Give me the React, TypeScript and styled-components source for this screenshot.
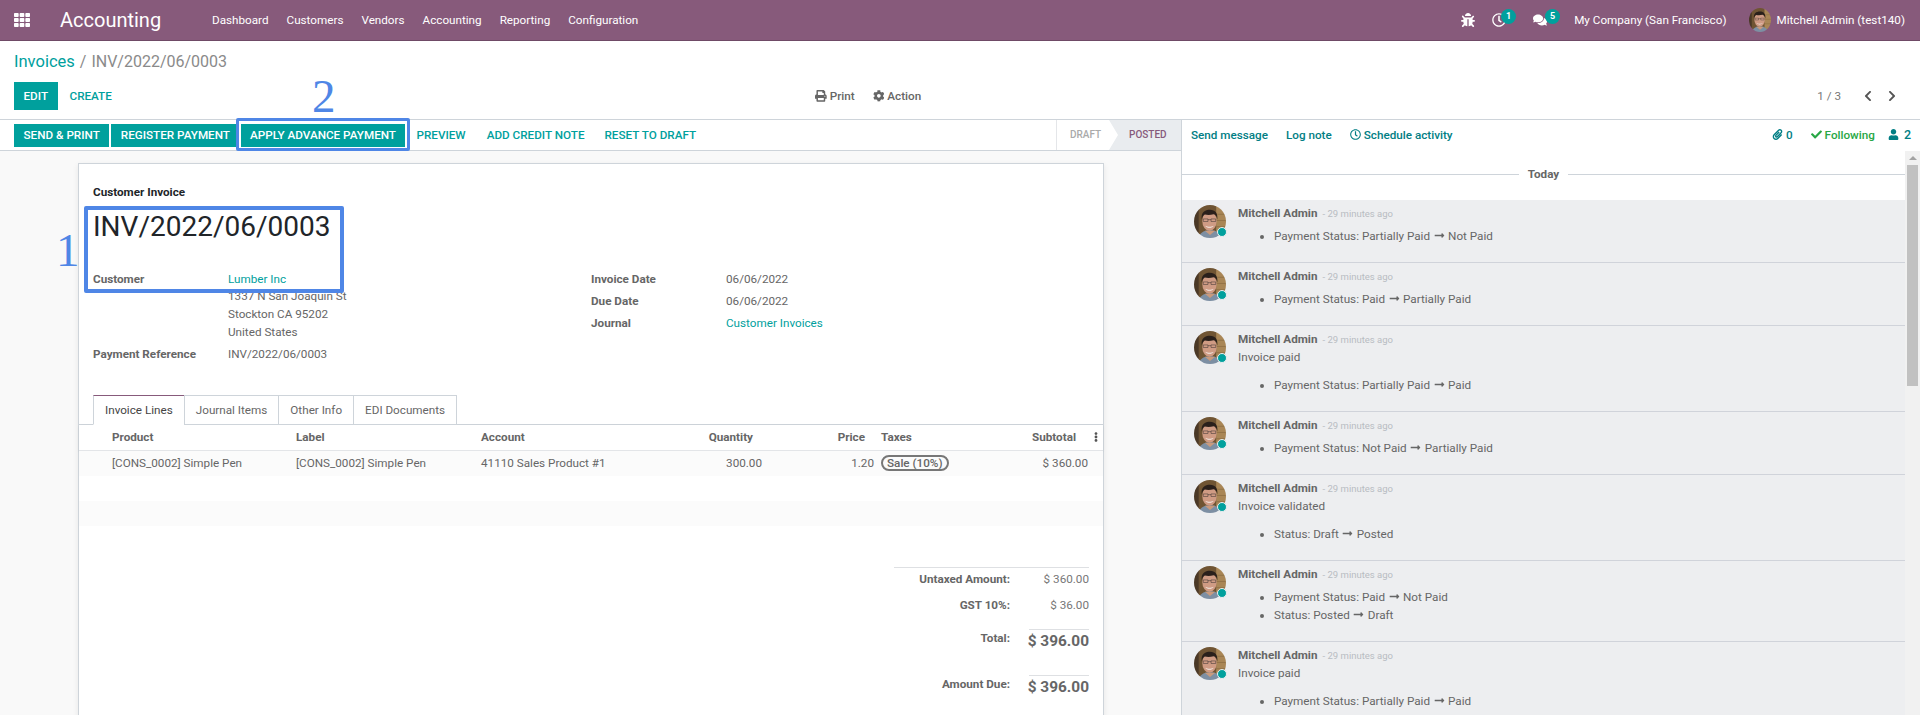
import React from 'react';
import styled, { createGlobalStyle } from 'styled-components';
import {
    FaTh,
    FaBug,
    FaRegClock,
    FaComments,
    FaPrint,
    FaCog,
    FaChevronLeft,
    FaChevronRight,
    FaPaperclip,
    FaCheck,
    FaUser,
    FaLongArrowAltRight,
    FaEllipsisV,
} from 'react-icons/fa';

const GlobalStyle = createGlobalStyle`
    html, body {
        margin: 0;
        height: 715px;
        overflow: hidden;
        background: #fff;
        font-family: Roboto, "Noto Sans", sans-serif;
        font-size: 11.7px;
        line-height: 18px;
        color: #666;
    }
    * {
        box-sizing: border-box;
    }
`;

const TEAL = '#00a09d';
const ANNOTATION = '#4f86e6';

const Page = styled.div`
    display: flex;
    flex-direction: column;
    width: 1920px;
    height: 715px;
    overflow: hidden;
`;

const Navbar = styled.header`
    display: flex;
    align-items: center;
    flex: none;
    height: 41px;
    padding: 0 15px 0 14px;
    background: #875a7b;
    border-bottom: 1px solid #6f4a66;
    color: #fff;
`;

const AppsButton = styled.span`
    display: flex;
    font-size: 16px;
    width: 46px;
`;

const AppName = styled.span`
    font-size: 20px;
    width: 152px;
`;

const NavMenu = styled.nav`
    display: flex;
    gap: 18px;
`;

const NavRight = styled.div`
    display: flex;
    align-items: center;
    margin-left: auto;
`;

const NavIcon = styled.span<{ $width: number }>`
    position: relative;
    display: flex;
    align-items: center;
    width: ${(p) => p.$width}px;
    font-size: 14px;
`;

const NavBadge = styled.span<{ $left: number }>`
    position: absolute;
    left: ${(p) => p.$left}px;
    top: -4px;
    width: 15px;
    height: 15px;
    border-radius: 50%;
    background: ${TEAL};
    font-size: 9px;
    line-height: 15px;
    font-weight: 700;
    text-align: center;
`;

const CompanyName = styled.span`
    margin-right: 23px;
`;

const UserAvatar = styled.span`
    display: flex;
    width: 22px;
    height: 24px;
    margin-right: 5px;
    border-radius: 50%;
    overflow: hidden;
`;

const ControlPanel = styled.div`
    flex: none;
    height: 79px;
    padding: 0 14px;
    background: #fff;
    border-bottom: 1px solid #ced4da;
`;

const Breadcrumb = styled.div`
    height: 41px;
    font-size: 16px;
    line-height: 41px;
    color: #8a8a8a;
    a {
        font-size: 16.5px;
        color: ${TEAL};
    }
`;

const CrumbSeparator = styled.span`
    margin: 0 5px 0 5px;
`;

const ControlRow = styled.div`
    display: grid;
    grid-template-columns: 801px auto 1fr;
    align-items: center;
    height: 28px;
`;

const ButtonGroup = styled.div`
    display: flex;
    align-items: center;
`;

const PrimaryButton = styled.button<{ $tall?: boolean }>`
    height: ${(p) => (p.$tall ? 28 : 23)}px;
    padding: 0 9.5px;
    margin-right: 2px;
    border: 0;
    border-radius: 0;
    background: ${TEAL};
    color: #fff;
    font: 500 11.7px/18px Roboto, sans-serif;
    text-transform: uppercase;
`;

const ApplyButton = styled(PrimaryButton)`
    padding: 0 8.5px;
`;

const LinkButton = styled.a<{ $gap?: number }>`
    margin-left: ${(p) => p.$gap ?? 0}px;
    color: ${TEAL};
    font-weight: 500;
    text-transform: uppercase;
`;

const SideActions = styled.div`
    display: flex;
    gap: 18px;
    font-weight: 500;
    color: #666;
    span {
        display: flex;
        align-items: center;
        gap: 3px;
    }
`;

const Pager = styled.div`
    display: flex;
    justify-content: flex-end;
    align-items: center;
    color: #777;
    padding-right: 8px;
    svg {
        margin-left: 12px;
        font-size: 12px;
        color: #555;
    }
    svg:first-of-type {
        margin-left: 21px;
    }
`;

const Workspace = styled.div`
    display: flex;
    flex: 1;
    min-height: 0;
`;

const FormColumn = styled.main`
    display: flex;
    flex-direction: column;
    width: 1182px;
    flex: none;
    border-right: 1px solid #ced4da;
`;

const StatusBar = styled.div`
    position: relative;
    display: flex;
    flex: none;
    align-items: center;
    justify-content: space-between;
    height: 31px;
    padding-left: 14px;
    background: #fff;
    border-bottom: 1px solid #ced4da;
`;

const StatusSteps = styled.div`
    display: flex;
    align-self: stretch;
    width: 125px;
    border-left: 1px solid #e4e6e9;
    font-size: 10px;
    font-weight: 500;
    text-transform: uppercase;
`;

const DraftStep = styled.span`
    display: flex;
    align-items: center;
    width: 52px;
    padding-left: 13px;
    color: #aaa;
`;

const PostedStep = styled.span`
    display: flex;
    align-items: center;
    flex: 1;
    padding-left: 20px;
    background: #e9ecef;
    clip-path: polygon(0 0, 100% 0, 100% 100%, 0 100%, 9px 50%);
    color: #875a7b;
`;

const FormScroll = styled.div`
    flex: 1;
    min-height: 0;
    overflow: hidden;
    padding: 12px 77px 0 78px;
    background: #f9f9f9;
`;

const Sheet = styled.section`
    position: relative;
    height: 600px;
    padding-top: 19px;
    background: #fff;
    border: 1px solid #ced4da;
    box-shadow: 0 2px 6px rgba(0, 0, 0, 0.08);
`;

const SheetKind = styled.div`
    margin-left: 14px;
    color: #212529;
    font-weight: 700;
`;

const InvoiceTitle = styled.h1`
    margin: 6px 0 0 14px;
    height: 63px;
    font-size: 28px;
    line-height: 40px;
    font-weight: 400;
    color: #212529;
`;

const FieldColumns = styled.div`
    display: grid;
    grid-template-columns: 498px 1fr;
    margin: 0 0 0 14px;
    align-items: start;
`;

const FieldGroup = styled.div`
    display: grid;
    grid-template-columns: 135px 1fr;
    row-gap: 4px;
`;

const FieldLabel = styled.div`
    font-weight: 700;
`;

const FieldValue = styled.div``;

const FieldLink = styled.a`
    color: ${TEAL};
`;

const Address = styled.div`
    margin-top: -1px;
`;

const Tabs = styled.div`
    display: flex;
    height: 30px;
    margin-top: 32px;
    padding-left: 14px;
    border-bottom: 1px solid #ced4da;
`;

const Tab = styled.span<{ $active?: boolean }>`
    display: flex;
    align-items: center;
    height: 30px;
    padding: 0 11px 1px;
    margin-left: -1px;
    white-space: nowrap;
    border: 1px solid #ced4da;
    border-top-color: ${(p) => (p.$active ? '#875a7b' : '#ced4da')};
    border-bottom-color: ${(p) => (p.$active ? '#fff' : '#ced4da')};
    background: #fff;
    color: ${(p) => (p.$active ? '#444' : '#666')};
    &:first-child {
        margin-left: 0;
    }
`;

const COLUMNS = '29px 184px 185px 177px 112px 111px 99px 115px 12px';

const TableHead = styled.div`
    display: grid;
    grid-template-columns: ${COLUMNS};
    align-items: center;
    height: 26px;
    padding-bottom: 2px;
    border-bottom: 1px solid #e3e5e8;
    box-shadow: 0 1px 3px rgba(0, 0, 0, 0.05);
    font-weight: 700;
`;

const TableRow = styled.div<{ $odd?: boolean }>`
    display: grid;
    grid-template-columns: ${COLUMNS};
    align-items: center;
    height: 25px;
    padding-bottom: 1px;
    background: ${(p) => (p.$odd ? '#fbfbfb' : '#fff')};
`;

const Cell = styled.div<{ $right?: boolean; $pad?: number }>`
    padding-left: 4px;
    padding-right: ${(p) => p.$pad ?? 0}px;
    text-align: ${(p) => (p.$right ? 'right' : 'left')};
`;

const KebabCell = styled.div`
    display: flex;
    font-size: 10px;
    color: #555;
`;

const TaxPill = styled.span`
    display: inline-block;
    height: 16px;
    padding: 0 4px;
    border: 2px solid #777;
    border-radius: 8px;
    line-height: 12px;
    font-weight: 500;
`;

const Totals = styled.div`
    display: grid;
    grid-template-columns: 117px 78px;
    width: 195px;
    margin: 41px 14px 0 auto;
    border-top: 1px solid #dee0e3;
`;

const TotalLabel = styled.div<{ $height: number }>`
    height: ${(p) => p.$height}px;
    padding: 2px 1px 0 0;
    text-align: right;
    font-weight: 700;
`;

const TotalValue = styled.div`
    padding-top: 2px;
    text-align: right;
    color: #777;
`;

const GrandLabel = styled(TotalLabel)`
    padding-top: 0;
`;

const GrandValue = styled.div`
    display: flex;
    justify-content: flex-end;
    height: 46px;
    margin-left: 18px;
    border-top: 1px solid #dee0e3;
    font-size: 15.4px;
    line-height: 22px;
    font-weight: 700;
    white-space: nowrap;
`;

const TitleHighlight = styled.div`
    position: absolute;
    left: 5px;
    top: 42px;
    width: 260px;
    height: 87px;
    border: 4px solid ${ANNOTATION};
    border-radius: 2px;
    pointer-events: none;
`;

const ButtonHighlight = styled.div`
    position: absolute;
    left: 236px;
    top: -2px;
    width: 174px;
    height: 33px;
    border: 3px solid ${ANNOTATION};
    border-radius: 2px;
    pointer-events: none;
`;

const AnnotationDigit = styled.span<{ $left: number; $top: number }>`
    position: absolute;
    left: ${(p) => p.$left}px;
    top: ${(p) => p.$top}px;
    font-family: "Liberation Serif", serif;
    font-size: 47px;
    line-height: 47px;
    color: ${ANNOTATION};
`;

const Chatter = styled.aside`
    display: flex;
    flex-direction: column;
    flex: 1;
    min-width: 0;
`;

const ChatterBar = styled.div`
    display: flex;
    flex: none;
    align-items: center;
    height: 31px;
    padding: 0 9px 2px 9px;
    background: #fff;
    font-weight: 500;
    color: #017e84;
`;

const ChatterAction = styled.span<{ $gap?: number }>`
    display: flex;
    align-items: center;
    gap: 3px;
    margin-left: ${(p) => p.$gap ?? 0}px;
    svg {
        font-size: 11px;
    }
`;

const FollowAction = styled(ChatterAction)`
    color: #28a745;
`;

const FollowersAction = styled(ChatterAction)`
    gap: 5px;
    font-size: 12.5px;
`;

const ChatterRight = styled.div`
    display: flex;
    margin-left: auto;
`;

const ChatterBody = styled.div`
    display: flex;
    flex: 1;
    min-height: 0;
`;

const Thread = styled.div`
    flex: 1;
    min-width: 0;
    overflow: hidden;
`;

const DayDivider = styled.div`
    display: flex;
    align-items: center;
    gap: 9px;
    height: 49px;
    padding: 0 0 3px 0;
    font-weight: 700;
    &::before,
    &::after {
        content: '';
        flex: 1;
        height: 1px;
        background: #ced4da;
    }
`;

const Message = styled.article`
    display: flex;
    padding: 4px 0 17px 12px;
    background: #edeef0;
    & + & {
        border-top: 1px solid #d0d3da;
    }
`;

const AvatarWrap = styled.div`
    position: relative;
    flex: none;
    width: 32px;
    height: 33px;
    margin: 1px 12px 0 0;
`;

const AvatarClip = styled.div`
    display: flex;
    width: 100%;
    height: 100%;
    border-radius: 50%;
    overflow: hidden;
`;

const PresenceDot = styled.span`
    position: absolute;
    right: -1px;
    bottom: 1px;
    width: 10px;
    height: 10px;
    border: 1px solid #edeef0;
    border-radius: 50%;
    background: ${TEAL};
`;

const MessageHead = styled.div`
    display: flex;
    align-items: baseline;
    height: 18px;
`;

const Author = styled.span`
    font-weight: 700;
`;

const Stamp = styled.span`
    margin-left: 5px;
    font-size: 9.5px;
    line-height: 12px;
    color: #b8bcc2;
`;

const ChangeList = styled.ul<{ $afterText?: boolean }>`
    margin: ${(p) => (p.$afterText ? 10 : 5)}px 0 0;
    padding: 0 0 0 36px;
    svg {
        margin: 0 3.5px;
        font-size: 11px;
        vertical-align: -1px;
    }
`;

const ScrollTrack = styled.div`
    display: flex;
    flex-direction: column;
    align-items: center;
    flex: none;
    width: 15px;
    background: #f1f1f1;
`;

const ScrollArrow = styled.span`
    width: 0;
    height: 0;
    margin: 5px 0;
    border: 4px solid transparent;
    border-top: 0;
    border-bottom: 4px solid #a3a3a3;
`;

const ScrollThumb = styled.div`
    width: 11px;
    height: 221px;
    background: #c1c1c1;
`;

const FaceSvg = styled.svg`
    filter: blur(0.3px);
`;

const Face: React.FC = () => (
    <FaceSvg viewBox="0 0 32 32" width="100%" height="100%" preserveAspectRatio="xMidYMid slice">
        <rect width="32" height="32" fill="#6f5433" />
        <rect x="22" width="10" height="32" fill="#a98656" />
        <rect width="5" height="32" fill="#4a3826" />
        <path d="M22 9h10M22 15h10M22 21h10" stroke="#8a6b42" strokeWidth="0.7" />
        <path d="M5 32c1-5 5-7.500 11-7.500S26 27 27 32z" fill="#7d8fa3" />
        <path d="M11 25l5 4 5-4z" fill="#c99a7d" />
        <ellipse cx="15.500" cy="15.500" rx="7" ry="9.500" fill="#cf9b84" />
        <path d="M8 14C7 7 11 4.500 16 4.500S24 8 23 14c-.6-3-1.500-4.500-3.500-5-3 .8-6 .8-8.500.3-1.800.9-2.500 2.500-3 4.700z" fill="#2a201b" />
        <path d="M9.500 13.500h4.500v2.500H9.500zM17 13.500h4.500v2.500H17zM14 14.200h3" fill="none" stroke="#3a3230" strokeWidth="0.5" />
        <path d="M11.500 20c2 1.500 6 1.500 8 0-1 2.600-7 2.600-8 0z" fill="#f4ece6" />
    </FaceSvg>
);

type LogEntry = { text?: string; changes: [string, string][] };

const ENTRIES: LogEntry[] = [
    { changes: [['Payment Status: Partially Paid', 'Not Paid']] },
    { changes: [['Payment Status: Paid', 'Partially Paid']] },
    { text: 'Invoice paid', changes: [['Payment Status: Partially Paid', 'Paid']] },
    { changes: [['Payment Status: Not Paid', 'Partially Paid']] },
    { text: 'Invoice validated', changes: [['Status: Draft', 'Posted']] },
    { changes: [['Payment Status: Paid', 'Not Paid'], ['Status: Posted', 'Draft']] },
    { text: 'Invoice paid', changes: [['Payment Status: Partially Paid', 'Paid']] },
];

const App: React.FC = () => {
    return (
        <Page>
            <GlobalStyle />
            <Navbar>
                <AppsButton>
                    <FaTh />
                </AppsButton>
                <AppName>Accounting</AppName>
                <NavMenu>
                    <span>Dashboard</span>
                    <span>Customers</span>
                    <span>Vendors</span>
                    <span>Accounting</span>
                    <span>Reporting</span>
                    <span>Configuration</span>
                </NavMenu>
                <NavRight>
                    <NavIcon $width={31}>
                        <FaBug />
                    </NavIcon>
                    <NavIcon $width={41}>
                        <FaRegClock />
                        <NavBadge $left={9}>1</NavBadge>
                    </NavIcon>
                    <NavIcon $width={41}>
                        <FaComments />
                        <NavBadge $left={12}>5</NavBadge>
                    </NavIcon>
                    <CompanyName>My Company (San Francisco)</CompanyName>
                    <UserAvatar>
                        <Face />
                    </UserAvatar>
                    <span>Mitchell Admin (test140)</span>
                </NavRight>
            </Navbar>

            <ControlPanel>
                <Breadcrumb>
                    <a>Invoices</a>
                    <CrumbSeparator>/</CrumbSeparator>
                    INV/2022/06/0003
                </Breadcrumb>
                <ControlRow>
                    <ButtonGroup>
                        <PrimaryButton $tall>Edit</PrimaryButton>
                        <LinkButton $gap={10}>Create</LinkButton>
                    </ButtonGroup>
                    <SideActions>
                        <span>
                            <FaPrint /> Print
                        </span>
                        <span>
                            <FaCog /> Action
                        </span>
                    </SideActions>
                    <Pager>
                        1 / 3
                        <FaChevronLeft />
                        <FaChevronRight />
                    </Pager>
                </ControlRow>
            </ControlPanel>

            <Workspace>
                <FormColumn>
                    <StatusBar>
                        <ButtonGroup>
                            <PrimaryButton>Send &amp; Print</PrimaryButton>
                            <PrimaryButton>Register Payment</PrimaryButton>
                            <ApplyButton>Apply Advance Payment</ApplyButton>
                            <LinkButton $gap={10}>Preview</LinkButton>
                            <LinkButton $gap={21}>Add Credit Note</LinkButton>
                            <LinkButton $gap={20}>Reset to Draft</LinkButton>
                        </ButtonGroup>
                        <StatusSteps>
                            <DraftStep>Draft</DraftStep>
                            <PostedStep>Posted</PostedStep>
                        </StatusSteps>
                        <ButtonHighlight />
                        <AnnotationDigit $left={312} $top={-47}>2</AnnotationDigit>
                    </StatusBar>
                    <FormScroll>
                        <Sheet>
                            <SheetKind>Customer Invoice</SheetKind>
                            <InvoiceTitle>INV/2022/06/0003</InvoiceTitle>
                            <FieldColumns>
                                <FieldGroup>
                                    <FieldLabel>Customer</FieldLabel>
                                    <FieldValue>
                                        <FieldLink>Lumber Inc</FieldLink>
                                        <Address>
                                            1337 N San Joaquin St
                                            <br />
                                            Stockton CA 95202
                                            <br />
                                            United States
                                        </Address>
                                    </FieldValue>
                                    <FieldLabel>Payment Reference</FieldLabel>
                                    <FieldValue>INV/2022/06/0003</FieldValue>
                                </FieldGroup>
                                <FieldGroup>
                                    <FieldLabel>Invoice Date</FieldLabel>
                                    <FieldValue>06/06/2022</FieldValue>
                                    <FieldLabel>Due Date</FieldLabel>
                                    <FieldValue>06/06/2022</FieldValue>
                                    <FieldLabel>Journal</FieldLabel>
                                    <FieldValue>
                                        <FieldLink>Customer Invoices</FieldLink>
                                    </FieldValue>
                                </FieldGroup>
                            </FieldColumns>
                            <Tabs>
                                <Tab $active>Invoice Lines</Tab>
                                <Tab>Journal Items</Tab>
                                <Tab>Other Info</Tab>
                                <Tab>EDI Documents</Tab>
                            </Tabs>
                            <TableHead>
                                <span />
                                <Cell>Product</Cell>
                                <Cell>Label</Cell>
                                <Cell>Account</Cell>
                                <Cell $right $pad={13}>Quantity</Cell>
                                <Cell $right $pad={12}>Price</Cell>
                                <Cell>Taxes</Cell>
                                <Cell $right $pad={15}>Subtotal</Cell>
                                <KebabCell>
                                    <FaEllipsisV />
                                </KebabCell>
                            </TableHead>
                            <TableRow $odd>
                                <span />
                                <Cell>[CONS_0002] Simple Pen</Cell>
                                <Cell>[CONS_0002] Simple Pen</Cell>
                                <Cell>41110 Sales Product #1</Cell>
                                <Cell $right $pad={4}>300.00</Cell>
                                <Cell $right $pad={3}>1.20</Cell>
                                <Cell>
                                    <TaxPill>Sale (10%)</TaxPill>
                                </Cell>
                                <Cell $right $pad={3}>$ 360.00</Cell>
                            </TableRow>
                            <TableRow />
                            <TableRow $odd />
                            <Totals>
                                <TotalLabel $height={26}>Untaxed Amount:</TotalLabel>
                                <TotalValue>$ 360.00</TotalValue>
                                <TotalLabel $height={35}>GST 10%:</TotalLabel>
                                <TotalValue>$ 36.00</TotalValue>
                                <GrandLabel $height={46}>Total:</GrandLabel>
                                <GrandValue>$ 396.00</GrandValue>
                                <GrandLabel $height={46}>Amount Due:</GrandLabel>
                                <GrandValue>$ 396.00</GrandValue>
                            </Totals>
                            <TitleHighlight />
                            <AnnotationDigit $left={-23} $top={63}>1</AnnotationDigit>
                        </Sheet>
                    </FormScroll>
                </FormColumn>

                <Chatter>
                    <ChatterBar>
                        <ChatterAction>Send message</ChatterAction>
                        <ChatterAction $gap={18}>Log note</ChatterAction>
                        <ChatterAction $gap={18}>
                            <FaRegClock /> Schedule activity
                        </ChatterAction>
                        <ChatterRight>
                            <ChatterAction>
                                <FaPaperclip /> 0
                            </ChatterAction>
                            <FollowAction $gap={18}>
                                <FaCheck /> Following
                            </FollowAction>
                            <FollowersAction $gap={13}>
                                <FaUser /> 2
                            </FollowersAction>
                        </ChatterRight>
                    </ChatterBar>
                    <ChatterBody>
                        <Thread>
                            <DayDivider>Today</DayDivider>
                            {ENTRIES.map((entry, i) => (
                                <Message key={i}>
                                    <AvatarWrap>
                                        <AvatarClip>
                                            <Face />
                                        </AvatarClip>
                                        <PresenceDot />
                                    </AvatarWrap>
                                    <div>
                                        <MessageHead>
                                            <Author>Mitchell Admin</Author>
                                            <Stamp>- 29 minutes ago</Stamp>
                                        </MessageHead>
                                        {entry.text && <div>{entry.text}</div>}
                                        <ChangeList $afterText={!!entry.text}>
                                            {entry.changes.map(([from, to]) => (
                                                <li key={from}>
                                                    {from}
                                                    <FaLongArrowAltRight />
                                                    {to}
                                                </li>
                                            ))}
                                        </ChangeList>
                                    </div>
                                </Message>
                            ))}
                        </Thread>
                        <ScrollTrack>
                            <ScrollArrow />
                            <ScrollThumb />
                        </ScrollTrack>
                    </ChatterBody>
                </Chatter>
            </Workspace>
        </Page>
    );
};

export default App;
